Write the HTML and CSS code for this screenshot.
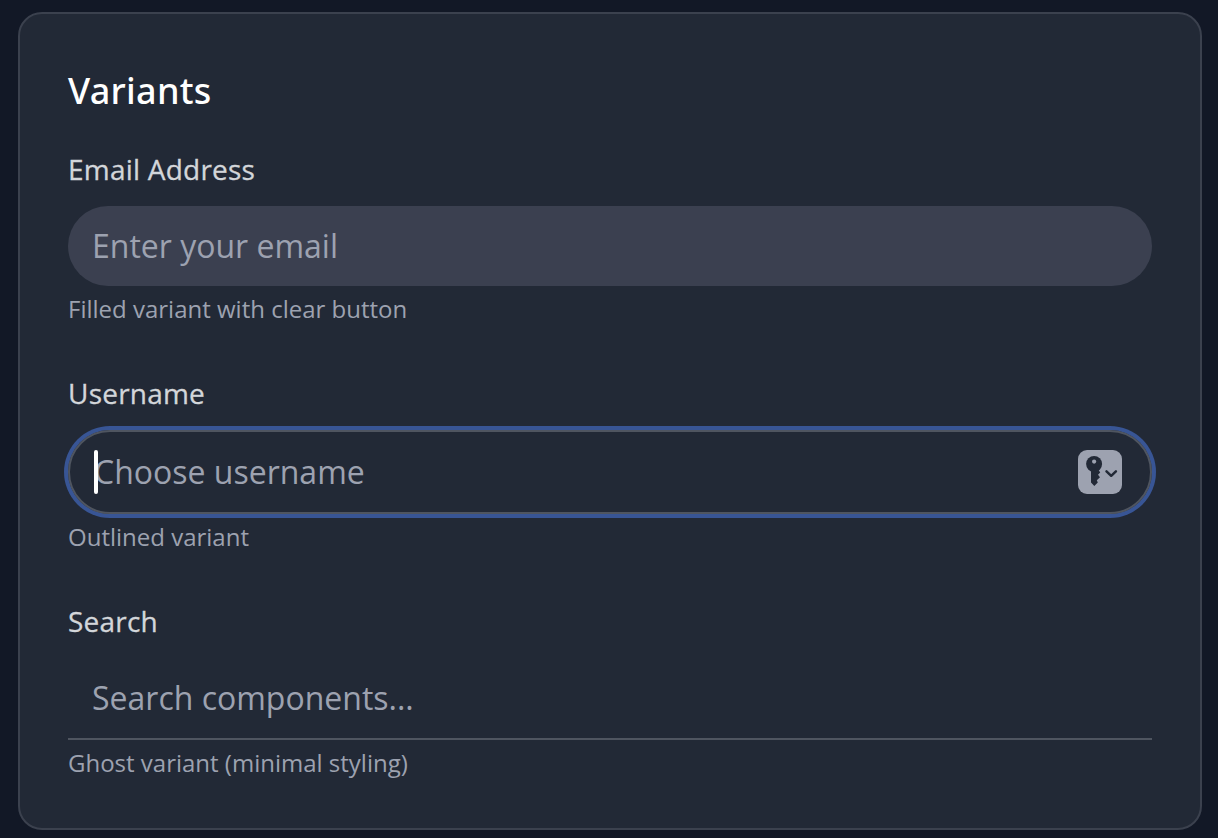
FILE: index.html
```html
<!DOCTYPE html>
<html lang="en">
<head>
<meta charset="utf-8">
<title>Input variants</title>
<link rel="stylesheet" href="styles.css">
</head>
<body>
<main class="card">
  <h2 class="title">Variants</h2>
  <div class="fields">
    <div class="field">
      <label class="label" for="email">Email Address</label>
      <input class="input filled" id="email" type="text" placeholder="Enter your email">
      <p class="hint">Filled variant with clear button</p>
    </div>
    <div class="field">
      <label class="label" for="username">Username</label>
      <div class="control">
        <input class="input outlined" id="username" type="text" placeholder="Choose username">
        <span class="caret"></span>
        <svg class="key" viewBox="0 0 44 44" aria-hidden="true">
          <rect width="44" height="44" rx="9" fill="#9da2b0"/>
          <circle cx="16.1" cy="14" r="8" fill="#222936"/>
          <path fill="#222936" d="M13 20v12.5l3.3 3.5 3.5-3.6-1-2.1 3.2-3-2-2.6 2.2-2.3-1.6-2.4Z"/>
          <circle cx="16.1" cy="11.6" r="2.1" fill="#9da2b0"/>
          <path d="m28.5 21.3 4.7 4.5 4.7-4.5" fill="none" stroke="#222936" stroke-width="2.5" stroke-linecap="round" stroke-linejoin="round"/>
        </svg>
      </div>
      <p class="hint">Outlined variant</p>
    </div>
    <div class="field">
      <label class="label" for="search">Search</label>
      <input class="input ghost" id="search" type="text" placeholder="Search components...">
      <p class="hint">Ghost variant (minimal styling)</p>
    </div>
  </div>
</main>
</body>
</html>
```
FILE: styles.css
```css
* {
  box-sizing: border-box;
}

body {
  margin: 0;
  height: 838px;
  padding: 12px 16px 8px 18px;
  overflow: hidden;
  background: #121826;
  font-family: "Open Sans", "Noto Sans", sans-serif;
}

.card {
  height: 818px;
  padding: 48px;
  border: 2px solid #3b414e;
  border-radius: 24px;
  background: #222936;
}

.title {
  margin: 0 0 30px;
  color: #fff;
  font-family: "Noto Sans", "Open Sans", sans-serif;
  font-size: 36px;
  font-weight: 500;
  letter-spacing: 0.27px;
  line-height: 58px;
}

.fields {
  display: flex;
  flex-direction: column;
  gap: 48px;
}

.field {
  display: flex;
  flex-direction: column;
}

.label {
  margin-bottom: 18px;
  color: #d3d6da;
  font-size: 28px;
  font-weight: 400;
  letter-spacing: 0.22px;
  line-height: 38px;
  -webkit-text-stroke: 0.3px #d3d6da;
}

.control {
  position: relative;
  display: flex;
}

.input {
  width: 100%;
  height: 80px;
  margin: 0;
  padding: 0 24px 2px;
  border: 0;
  outline: 0;
  background: transparent;
  color: #fff;
  font-family: inherit;
  font-size: 32px;
}

.input::placeholder {
  color: #9da2b0;
  opacity: 1;
}

.filled {
  border-radius: 40px;
  background: #3b4050;
}

.outlined {
  height: 84px;
  border: 2px solid #4f5560;
  border-radius: 42px;
  box-shadow: 0 0 0 4px #385595;
}

.ghost {
  height: 82px;
  padding-bottom: 1px;
  border-bottom: 2px solid #4f5560;
}

.caret {
  position: absolute;
  left: 26px;
  top: 20px;
  width: 4px;
  height: 44px;
  border-radius: 2px;
  background: #fff;
}

.key {
  position: absolute;
  right: 30px;
  top: 20px;
  width: 44px;
  height: 44px;
}

.hint {
  margin: 8px 0 2px;
  color: #9da2b0;
  font-size: 24px;
  line-height: 30px;
}
```
